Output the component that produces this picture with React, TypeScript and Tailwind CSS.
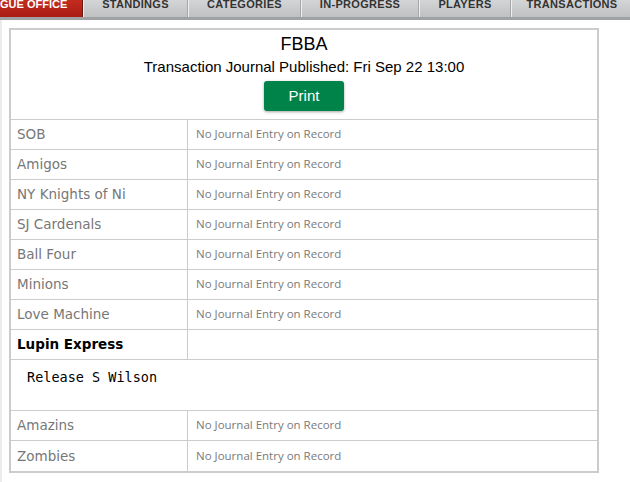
import React from "react";

const tabs = [
  { label: "STANDINGS", w: "w-[105px]" },
  { label: "CATEGORIES", w: "w-[113px]" },
  { label: "IN-PROGRESS", w: "w-[118px]" },
  { label: "PLAYERS", w: "w-[92px]" },
  { label: "TRANSACTIONS", w: "w-[122px]" },
];

const teamsTop = ["SOB", "Amigos", "NY Knights of Ni", "SJ Cardenals", "Ball Four", "Minions", "Love Machine"];
const teamsBottom = ["Amazins", "Zombies"];

function Row({ name, last }: { name: string; last?: boolean }) {
  return (
    <div className={`flex h-[30px] ${last ? "" : "border-b border-[#cccccc]"}`}>
      <div className="w-[177px] shrink-0 border-r border-[#cccccc] pl-[6px] flex items-center text-[13.5px] text-[#777777] font-['DejaVu_Sans',Verdana,sans-serif]">
        {name}
      </div>
      <div className="flex-1 pl-[8px] flex items-center pb-[1px] text-[11.5px] text-[#7a7a7a] font-['Open_Sans',sans-serif]">
        No Journal Entry on Record
      </div>
    </div>
  );
}

export default function App() {
  return (
    <div className="w-[630px] h-[482px] overflow-hidden bg-white">
      <div className="flex h-[17px] overflow-hidden font-['Liberation_Sans',Arial,sans-serif] font-bold text-[11px] leading-[11px]">
        <div className="w-[83px] shrink-0 overflow-hidden bg-gradient-to-b from-[#c42b1f] to-[#a91d14] border-r border-[#6e150e] text-white">
          <div className="whitespace-nowrap -ml-[22px] -mt-[1px]">LEAGUE OFFICE</div>
        </div>
        {tabs.map((t) => (
          <div
            key={t.label}
            className={`${t.w} shrink-0 bg-gradient-to-b from-[#d3d5d7] to-[#bec0c2] border-l border-l-[#eef0f1] border-r border-r-[#a4a6a8] text-[#333333] text-center tracking-[0.3px]`}
          >
            <div className="whitespace-nowrap -mt-[1px]">{t.label}</div>
          </div>
        ))}
      </div>
      <div className="h-[3px] bg-[#9fa1a3]" />
      <div className="border-l-[2px] border-[#ebebeb] h-[462px] pl-[7px] pt-[8px]">
        <div className="w-[590px] border-2 border-[#cccccc]">
          <div className="flex flex-col items-center border-b border-[#cccccc] pt-[4px] pb-[8px] font-['Liberation_Sans',Arial,sans-serif] text-black">
            <div className="text-[18px] leading-[21px]">FBBA</div>
            <div className="mt-[3px] text-[15px] leading-[18px]">Transaction Journal Published: Fri Sep 22 13:00</div>
            <button className="mt-[5px] w-[80px] h-[30px] rounded-[3px] bg-[#008348] text-white text-[15px] shadow-[0_1px_3px_rgba(0,0,0,0.35)]">
              Print
            </button>
          </div>
          {teamsTop.map((n) => (
            <Row key={n} name={n} />
          ))}
          <div className="flex h-[30px] border-b border-[#cccccc]">
            <div className="w-[177px] shrink-0 border-r border-[#cccccc] pl-[6px] flex items-center text-[13.5px] font-bold text-black font-['DejaVu_Sans',Verdana,sans-serif]">
              Lupin Express
            </div>
            <div className="flex-1" />
          </div>
          <div className="h-[51px] border-b border-[#cccccc] pl-[16px] pt-[8px] font-['DejaVu_Sans_Mono',monospace] text-[13.5px] leading-[18px] text-black">
            Release S Wilson
          </div>
          {teamsBottom.map((n, i) => (
            <Row key={n} name={n} last={i === teamsBottom.length - 1} />
          ))}
        </div>
      </div>
    </div>
  );
}
